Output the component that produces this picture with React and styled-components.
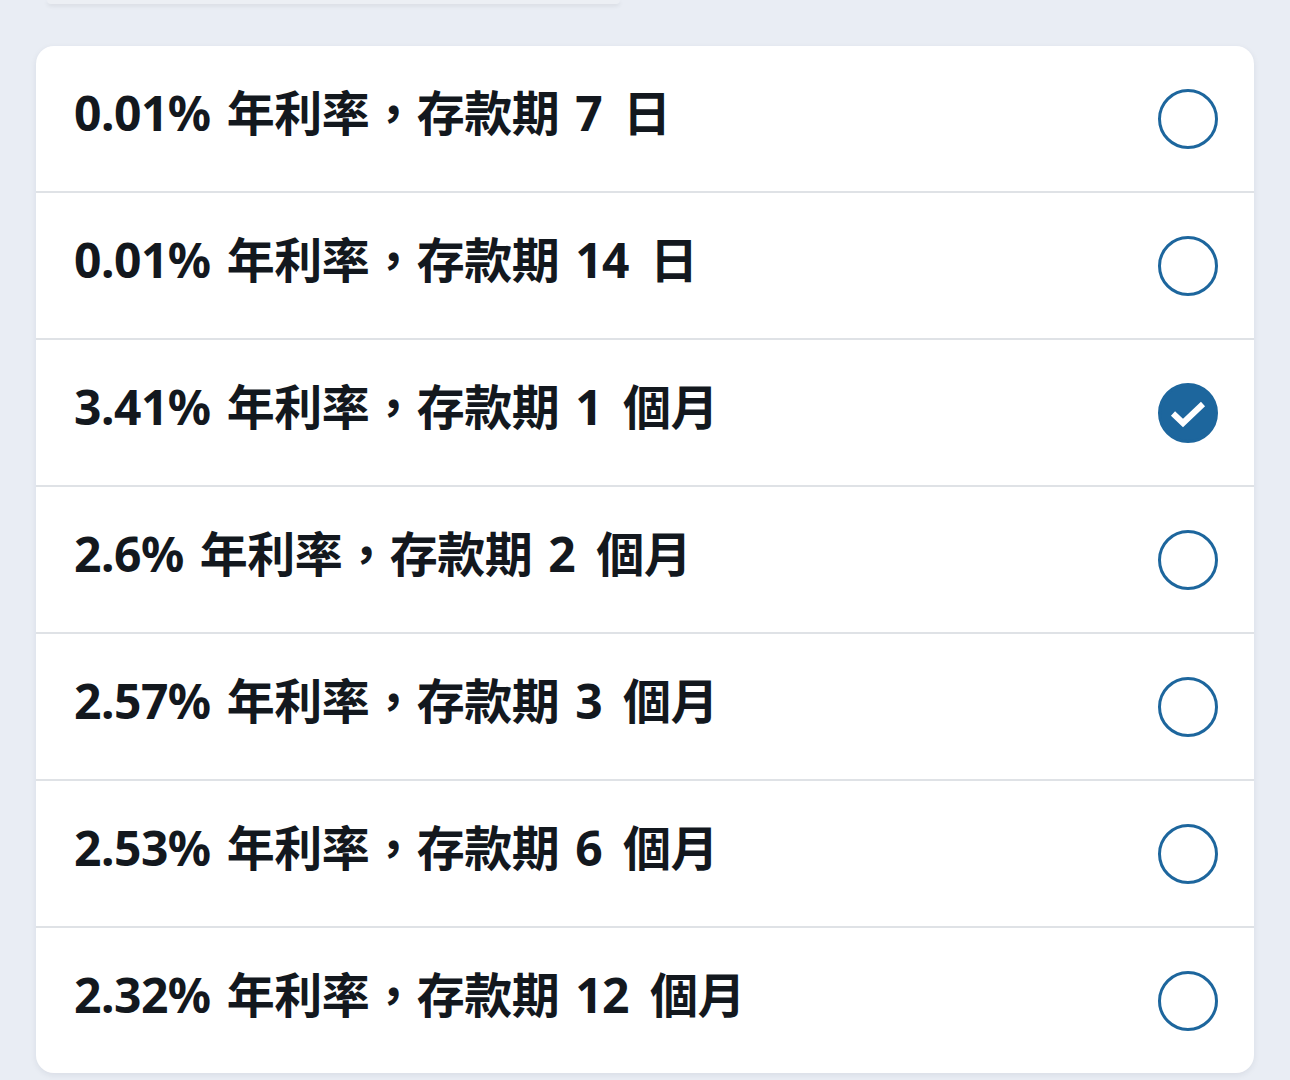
import React from 'react';
import { styled, createGlobalStyle } from 'styled-components';

const GlobalStyle = createGlobalStyle`
  html, body {
    margin: 0;
    padding: 0;
    background: #e9edf4;
  }
  body {
    font-family: "Noto Sans", "Noto Sans CJK TC", sans-serif;
  }
`;

const Page = styled.div`
  width: 1290px;
  height: 1080px;
  overflow: hidden;
  background: #e9edf4;
`;

const TopEdge = styled.div`
  margin-left: 47px;
  width: 573px;
  height: 4px;
  background: #eceff4;
  border-radius: 0 0 12px 12px;
  box-shadow: 0 2px 4px rgba(0, 0, 0, 0.08);
`;

const Card = styled.ul`
  list-style: none;
  margin: 42px 36px 0 36px;
  padding: 0;
  background: #ffffff;
  border-radius: 18px;
  box-shadow: 0 2px 6px rgba(30, 40, 60, 0.08);
  overflow: hidden;
`;

const Row = styled.li`
  height: 145px;
  display: flex;
  align-items: center;
  justify-content: space-between;
  padding: 0 36px 0 38px;
  border-top: ${p => (p.$first ? 'none' : '2px solid #dfe2e6')};
`;

const Label = styled.span`
  font-size: 48px;
  font-weight: 700;
  color: #13181e;
  margin-top: -18px;
  letter-spacing: -0.5px;
  word-spacing: 4px;
`;

const Unit = styled.span`
  margin-left: 5px;
`;

const Radio = styled.span`
  width: 60px;
  height: 60px;
  box-sizing: border-box;
  border-radius: 50%;
  border: 3px solid #1d669d;
  background: ${p => (p.$checked ? '#1d669d' : 'transparent')};
  display: flex;
  align-items: center;
  justify-content: center;
`;

const options = [
  { rate: '0.01%', num: '7', unit: '日' },
  { rate: '0.01%', num: '14', unit: '日' },
  { rate: '3.41%', num: '1', unit: '個月', checked: true },
  { rate: '2.6%', num: '2', unit: '個月' },
  { rate: '2.57%', num: '3', unit: '個月' },
  { rate: '2.53%', num: '6', unit: '個月' },
  { rate: '2.32%', num: '12', unit: '個月' },
];

const Check = () => (
  <svg width="40" height="40" viewBox="0 0 40 40">
    <path d="M5 20.5 L15 30 L35 11" fill="none" stroke="#fff" strokeWidth="6" />
  </svg>
);

export default function App() {
  return (
    <Page>
      <GlobalStyle />
      <TopEdge />
      <Card>
        {options.map((o, i) => (
          <Row key={i} $first={i === 0}>
            <Label>
              {o.rate} 年利率，存款期 {o.num} <Unit>{o.unit}</Unit>
            </Label>
            <Radio $checked={o.checked}>{o.checked && <Check />}</Radio>
          </Row>
        ))}
      </Card>
    </Page>
  );
}
